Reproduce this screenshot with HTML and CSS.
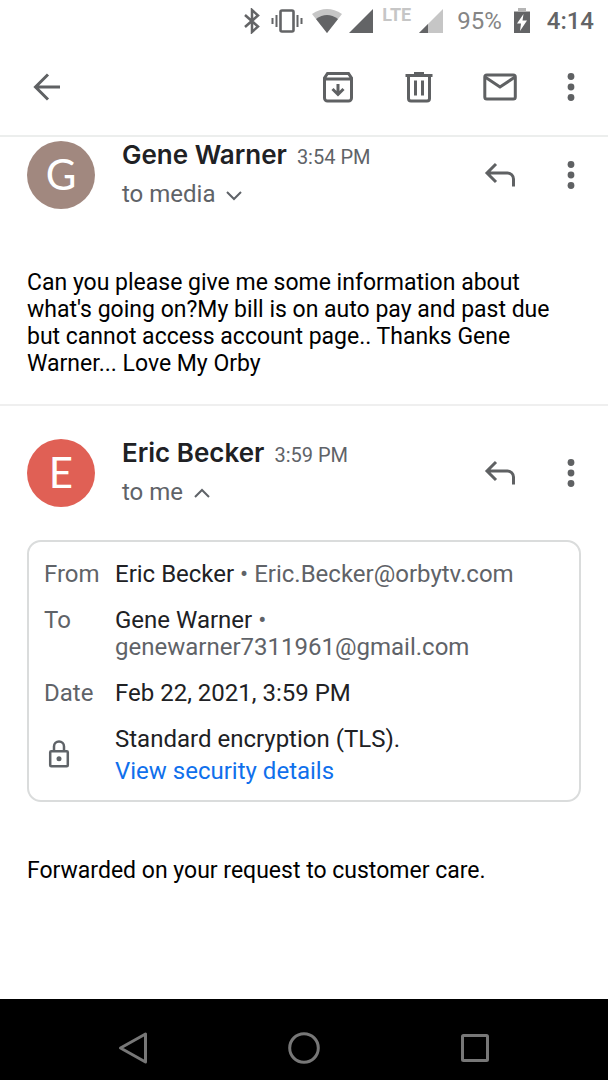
FILE: index.html
```html
<!DOCTYPE html>
<html lang="en">
<head>
<meta charset="utf-8">
<meta name="viewport" content="width=device-width, initial-scale=1">
<title>Mail</title>
<link rel="stylesheet" href="styles.css">
</head>
<body>
<div class="screen">
  <div class="status-bar">
    <svg class="bluetooth" width="16" height="26" viewBox="0 0 16 26" fill="none" stroke="currentColor" stroke-width="2.500"><path d="M1 7l13 11.500-6 5.500V2l6 5.500L1 19"/></svg>
    <svg class="vibrate" width="32" height="26" viewBox="0 0 32 26" fill="none" stroke="currentColor" stroke-width="2"><rect x="9.500" y="2.500" width="13" height="21" rx="1.500" stroke-width="2.600"/><path d="M5.500 7v12M1.500 10v6M26.500 7v12M30.500 10v6"/></svg>
    <svg class="wifi" width="30" height="24" viewBox="0 0 30 24"><path fill="#c6c6c6" d="M0 5Q15-5 30 5L15 24z"/><path fill="currentColor" d="M4 10Q15 2 26 10L15 24z"/></svg>
    <svg class="signal" width="24" height="24" viewBox="0 0 24 24"><path fill="currentColor" d="M24 0v24H0z"/></svg>
    <span class="network">LTE</span>
    <svg class="signal-low" width="24" height="24" viewBox="0 0 24 24"><path fill="#c6c6c6" d="M24 0v24H0z"/><path fill="currentColor" d="M9 15v9H0z"/></svg>
    <span class="percent">95%</span>
    <svg class="battery" width="16" height="26" viewBox="0 0 16 26"><path fill="#b5b5b5" d="M4 0h8v3h4v3H0V3h4z"/><path fill="currentColor" d="M0 4h16v21H0z"/><path fill="#fff" d="M9.500 6L3 15.500h4L6 23l7-10.500H8.500z"/></svg>
    <span class="clock">4:14</span>
  </div>

  <header class="app-bar">
    <button class="icon-button back" aria-label="Back"><svg width="40" height="40" viewBox="0 0 40 40" fill="none" stroke="currentColor" stroke-width="3"><path d="M33 20H9M21 7.500L8.500 20 21 32.500"/></svg></button>
    <button class="icon-button" aria-label="Archive"><svg width="40" height="40" viewBox="0 0 40 40" fill="none" stroke="currentColor" stroke-width="3"><path d="M6.500 11v20a3 3 0 0 0 3 3h21a3 3 0 0 0 3-3V11L30.500 6.500h-21zM7 12h26"/><path d="M20 17v10M14.500 22l5.500 5.500 5.500-5.500"/></svg></button>
    <button class="icon-button" aria-label="Delete"><svg width="40" height="40" viewBox="0 0 40 40" fill="none" stroke="currentColor" stroke-width="3"><path d="M6.500 8.500h27M15 6.500h10M9.500 9v22.500a2.500 2.500 0 0 0 2.500 2.500h16a2.500 2.500 0 0 0 2.500-2.500V9M16.500 13.500v15M23.500 13.500v15"/></svg></button>
    <button class="icon-button" aria-label="Mark as unread"><svg width="40" height="40" viewBox="0 0 40 40" fill="none" stroke="currentColor" stroke-width="3"><rect x="4.800" y="8" width="30.500" height="24" rx="2"/><path d="M5 10l15 10 15-10"/></svg></button>
    <button class="icon-button" aria-label="More options"><svg width="40" height="40" viewBox="0 0 40 40" fill="currentColor"><circle cx="20" cy="9.500" r="3.400"/><circle cx="20" cy="20" r="3.400"/><circle cx="20" cy="30.500" r="3.400"/></svg></button>
  </header>

  <main class="thread">
    <article class="message first">
      <div class="message-header">
        <div class="avatar brown">G</div>
        <div class="sender">
          <div class="sender-line"><span class="name">Gene Warner</span><span class="time">3:54 PM</span></div>
          <button class="recipients" aria-expanded="false">to media <svg width="16" height="16" viewBox="0 0 16 16" fill="none" stroke="currentColor" stroke-width="2"><path d="M1 5l7 7 7-7"/></svg></button>
        </div>
        <button class="icon-button" aria-label="Reply"><svg width="40" height="40" viewBox="0 0 40 40" fill="none" stroke="currentColor" stroke-width="3"><path d="M16 9l-9 9 9 9M7 18h20.500a6 6 0 0 1 6 6v7.500"/></svg></button>
        <button class="icon-button" aria-label="Message options"><svg width="40" height="40" viewBox="0 0 40 40" fill="currentColor"><circle cx="20" cy="9.500" r="3.400"/><circle cx="20" cy="20" r="3.400"/><circle cx="20" cy="30.500" r="3.400"/></svg></button>
      </div>
      <p class="body-text">Can you please give me some information about what's going on?My bill is on auto pay and past due but cannot access account page.. Thanks Gene Warner... Love My Orby</p>
    </article>

    <article class="message second">
      <div class="message-header">
        <div class="avatar red">E</div>
        <div class="sender">
          <div class="sender-line"><span class="name">Eric Becker</span><span class="time">3:59 PM</span></div>
          <button class="recipients" aria-expanded="true">to me <svg width="16" height="16" viewBox="0 0 16 16" fill="none" stroke="currentColor" stroke-width="2"><path d="M1 12l7-7 7 7"/></svg></button>
        </div>
        <button class="icon-button" aria-label="Reply"><svg width="40" height="40" viewBox="0 0 40 40" fill="none" stroke="currentColor" stroke-width="3"><path d="M16 9l-9 9 9 9M7 18h20.500a6 6 0 0 1 6 6v7.500"/></svg></button>
        <button class="icon-button" aria-label="Message options"><svg width="40" height="40" viewBox="0 0 40 40" fill="currentColor"><circle cx="20" cy="9.500" r="3.400"/><circle cx="20" cy="20" r="3.400"/><circle cx="20" cy="30.500" r="3.400"/></svg></button>
      </div>
      <dl class="details">
        <dt>From</dt><dd>Eric Becker <span class="muted">• Eric.Becker@orbytv.com</span></dd>
        <dt>To</dt><dd>Gene Warner <span class="muted">• <br>genewarner7311961@gmail.com</span></dd>
        <dt>Date</dt><dd>Feb 22, 2021, 3:59 PM</dd>
        <dt class="lock"><svg width="30" height="30" viewBox="0 0 30 30" fill="none" stroke="currentColor" stroke-width="2.500"><rect x="6.200" y="12.200" width="17.600" height="15" rx="1"/><path d="M10 12V7.500a5 5 0 0 1 10 0V12"/><circle cx="15" cy="19.800" r="2.500" fill="currentColor" stroke="none"/></svg></dt>
        <dd class="security"><span>Standard encryption (TLS).</span><a href="#">View security details</a></dd>
      </dl>
      <p class="body-text">Forwarded on your request to customer care.</p>
    </article>
  </main>

  <nav class="system-nav">
    <button aria-label="System back"><svg width="36" height="36" viewBox="0 0 36 36" fill="none" stroke="currentColor" stroke-width="3" stroke-linejoin="round"><path d="M30.500 4v28L5.500 18z"/></svg></button>
    <button aria-label="Home"><svg width="36" height="36" viewBox="0 0 36 36" fill="none" stroke="currentColor" stroke-width="3"><circle cx="18" cy="18" r="14.300"/></svg></button>
    <button aria-label="Recent apps"><svg width="36" height="36" viewBox="0 0 36 36" fill="none" stroke="currentColor" stroke-width="3"><rect x="5.500" y="5.500" width="25" height="25" rx="1"/></svg></button>
  </nav>
</div>
</body>
</html>
```
FILE: styles.css
```css
* { box-sizing: border-box; }

body {
  margin: 0;
  background: #fff;
  color: #202124;
  font-family: Roboto, "Liberation Sans", sans-serif;
  font-size: 23px;
  line-height: 27px;
}

button {
  margin: 0;
  padding: 0;
  border: 0;
  background: none;
  color: inherit;
  font: inherit;
}

svg { display: block; flex: none; }

.screen {
  display: flex;
  flex-direction: column;
  min-height: 100vh;
}

.status-bar {
  display: flex;
  align-items: center;
  justify-content: flex-end;
  height: 42px;
  padding-right: 14px;
  color: #636466;
}
.vibrate { margin-left: 11px; }
.wifi { margin-left: 9px; }
.signal { margin-left: 7px; }
.network {
  align-self: flex-start;
  margin-left: 9px;
  padding-top: 1px;
  color: #c6c6c6;
  font-size: 18px;
  font-weight: 700;
}
.signal-low { margin-left: 8px; }
.percent { margin-left: 14px; font-size: 24px; color: #858585; }
.battery { margin-left: 12px; }
.clock { margin-left: 17px; font-size: 24px; font-weight: 500; }

.app-bar {
  display: flex;
  align-items: center;
  height: 95px;
  padding: 0 6px 4px;
  border-bottom: 2px solid #eceeed;
  color: #5f6163;
}

.icon-button {
  display: flex;
  flex: none;
  align-items: center;
  justify-content: center;
  width: 81px;
  height: 48px;
  color: #5f6163;
}
.icon-button:last-child { width: 62px; }
.icon-button.back { margin-right: auto; }

.thread { flex: 1; }

.message { padding: 0 27px; }
.message.first {
  padding-top: 4px;
  padding-bottom: 27px;
  border-bottom: 2px solid #efefef;
}
.message.second { padding-top: 33px; }

.message-header {
  display: flex;
  align-items: center;
  height: 67px;
  margin-right: -21px;
}

.avatar {
  display: flex;
  flex: none;
  align-items: center;
  justify-content: center;
  width: 68px;
  height: 68px;
  border-radius: 50%;
  color: #fff;
  font-family: Lato, sans-serif;
  font-size: 42px;
  font-weight: 400;
}
.brown { background: #a1887f; }
.red { background: #e06055; }

.sender { flex: 1; margin-left: 27px; }
.sender-line { display: flex; align-items: baseline; gap: 10px; }
.name {
  color: #202124;
  font-size: 26px;
  font-weight: 600;
  font-family: Inter, Roboto, sans-serif;
}
.time { color: #5f6368; font-size: 20px; }
.recipients {
  display: flex;
  align-items: center;
  gap: 11px;
  margin-top: 10px;
  color: #5f6368;
  font-size: 24px;
}

.body-text { margin: 61px 0 0; color: #000; }

.details {
  display: grid;
  grid-template-columns: 71px 1fr;
  row-gap: 19px;
  margin: 34px 0 0;
  padding: 19px 15px 15px;
  border: 2px solid #dadcdc;
  border-radius: 14px;
  font-size: 24px;
}
.details dt { color: #5f6368; }
.details dd { margin: 0; }
.details + .body-text { margin-top: 55px; }
.muted { color: #5f6368; }
.details .lock { align-self: center; padding-bottom: 4px; }
.security {
  display: flex;
  flex-direction: column;
  align-items: flex-start;
  gap: 5px;
}
.security a { color: #1070ec; text-decoration: none; }

.system-nav {
  display: grid;
  grid-template-columns: repeat(3, 1fr);
  padding: 0 48px;
  height: 81px;
  background: #000;
  color: #777;
}
.system-nav button {
  display: flex;
  align-items: center;
  justify-content: center;
  padding-top: 16px;
}
```
